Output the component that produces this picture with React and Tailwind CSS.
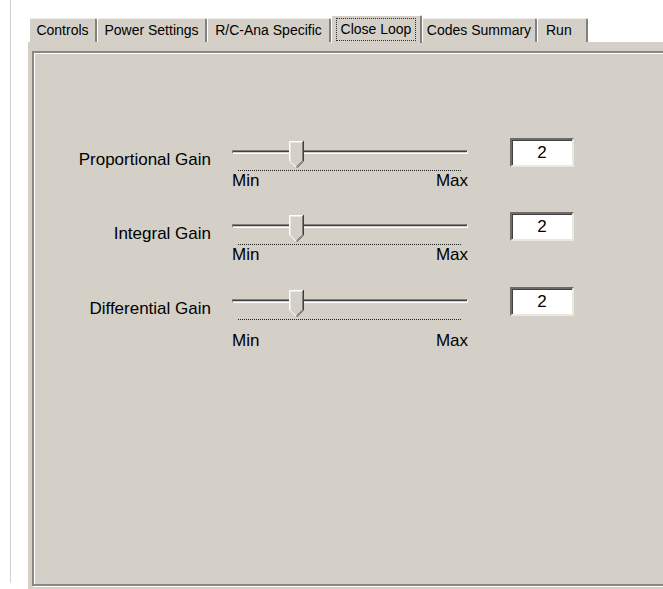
import React from 'react';

const tabs = [
    { name: 'Controls', w: 'w-[68px]' },
    { name: 'Power Settings', w: 'w-[110px]' },
    { name: 'R/C-Ana Specific', w: 'w-[124px]' },
    { name: 'Close Loop', w: 'w-[91px]', active: true },
    { name: 'Codes Summary', w: 'w-[115px]' },
    { name: 'Run', w: 'w-[51px]', left: true },
];

const gains = [
    { label: 'Proportional Gain', value: '2', h: 'h-[74px]', gap: 'mt-0' },
    { label: 'Integral Gain', value: '2', h: 'h-[75px]', gap: 'mt-0' },
    { label: 'Differential Gain', value: '2', h: 'h-[75px]', gap: 'mt-[11px]' },
];

// classic trackbar thumb, pointing down
function Thumb() {
    return (
        <svg width="15" height="27" viewBox="0 0 15 27" className="absolute left-[57px] top-[3px]">
            <path d="M0.5 0.5 H14.5 V20 L7.5 26.5 L0.5 20 Z" fill="#d4d0c8" />
            <path d="M0.5 20 V0.5 H13.5" fill="none" stroke="#ffffff" />
            <path d="M1.5 20 V1.5 H12.5" fill="none" stroke="#e8e6e0" />
            <path d="M0.5 20 L7 26" fill="none" stroke="#ffffff" />
            <path d="M14.5 0 V20.2 L7.5 27" fill="none" stroke="#404040" />
            <path d="M13.5 1 V19.8 L7.5 25.6" fill="none" stroke="#808080" />
        </svg>
    );
}

function Slider({ gap }) {
    return (
        <div className="relative ml-[21px] w-[236px] shrink-0">
            <div className="mt-[12px] h-[4px] border-t border-l border-b border-r border-t-[#808080] border-l-[#808080] border-b-white border-r-white bg-[#d4d0c8] shadow-[inset_0_1px_0_#404040]" />
            <div className="ml-[6px] mt-[16px] w-[223px] border-t border-dotted border-[#202020]" />
            <div className={`flex justify-between text-[17px] leading-[20px] ${gap}`}>
                <span>Min</span>
                <span>Max</span>
            </div>
            <Thumb />
        </div>
    );
}

export default function App() {
    return (
        <div className="flex h-[589px] w-[663px] overflow-hidden bg-white font-['Liberation_Sans',Arial,sans-serif] text-black">
            <div className="ml-[10px] mr-[17px] h-[583px] w-px shrink-0 bg-[#d4d0c8]" />

            <div className="flex w-[640px] shrink-0 flex-col pt-[15px]">
                {/* Tab strip */}
                <div className="flex h-[27px] items-end pl-px">
                    {tabs.map(t => t.active ? (
                        <div key={t.name} className={`${t.w} relative z-10 -mb-px flex h-[28px] items-center justify-center rounded-t-[2px] border-t border-l border-white border-r-2 border-r-[#808080] bg-[#d4d0c8] pb-px`}>
                            <span className="border border-dotted border-[#303030] px-[4px] text-[14px] leading-[21px]">{t.name}</span>
                        </div>
                    ) : (
                        <div key={t.name} className={`${t.w} flex h-[24px] items-center ${t.left ? 'justify-start pl-[8px]' : 'justify-center'} rounded-t-[2px] border-t border-l border-t-[#eeece8] border-l-white border-r-2 border-r-[#808080] bg-[#d4d0c8] text-[14px]`}>
                            {t.name}
                        </div>
                    ))}
                </div>

                {/* Page */}
                <div className="flex-1 bg-[#d4d0c8] pb-[3px] pl-[4px] pt-[9px]">
                    <div className="h-full border-2 border-[#8a8884] pt-[85px] shadow-[inset_1px_1px_0_#ffffff,1px_1px_0_#ffffff]">
                        {gains.map(g => (
                            <div key={g.label} className={`flex items-start ${g.h}`}>
                                <div className="mt-[12px] w-[177px] shrink-0 text-right text-[17px] leading-[20px]">{g.label}</div>
                                <Slider gap={g.gap} />
                                <div className="ml-[42px] flex h-[29px] w-[64px] shrink-0 items-center justify-center border-2 border-t-[#6e6c68] border-l-[#6e6c68] border-b-[#eae8e2] border-r-[#eae8e2] bg-white text-[17px] shadow-[inset_1px_1px_0_#404040]">
                                    {g.value}
                                </div>
                            </div>
                        ))}
                    </div>
                </div>
            </div>
        </div>
    );
}
